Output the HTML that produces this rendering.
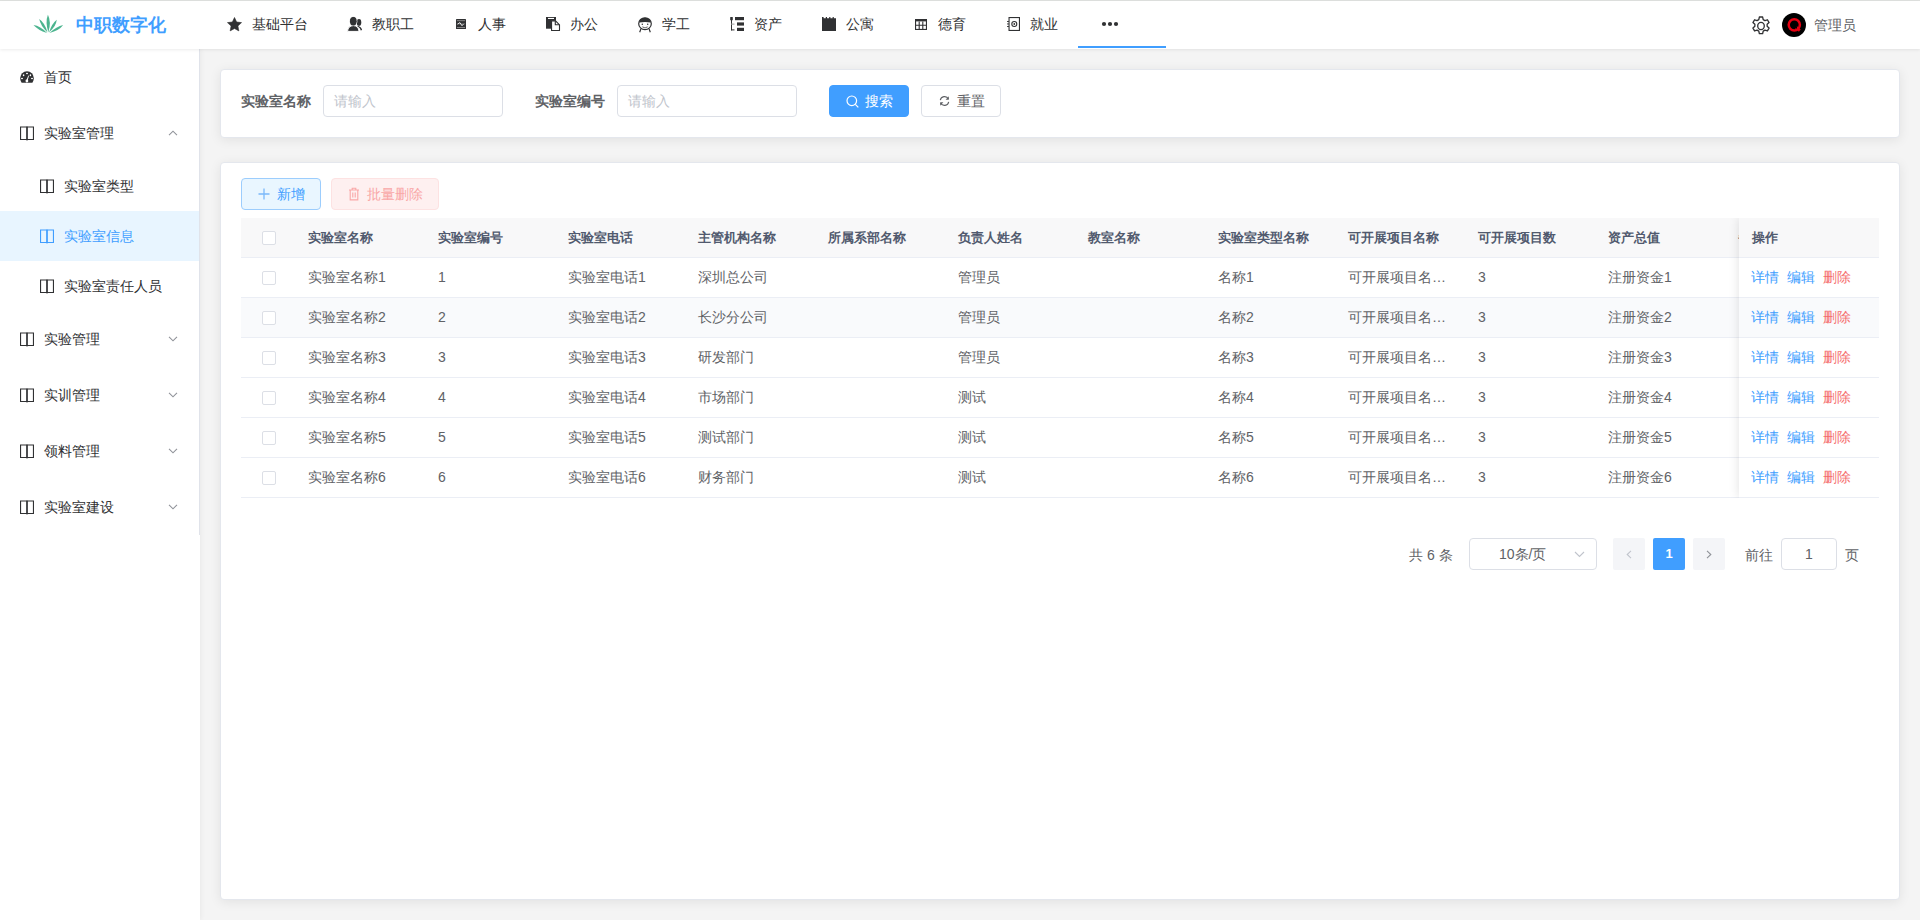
<!DOCTYPE html>
<html><head><meta charset="utf-8"><title>实验室信息</title>
<style>
*{box-sizing:border-box;margin:0;padding:0}
html,body{width:1920px;height:920px;overflow:hidden}
body{position:relative;background:#f4f4f4;font-family:"Liberation Sans",sans-serif;font-size:14px;color:#606266}
.abs{position:absolute}
.t{position:absolute;white-space:nowrap;line-height:20px}
.topline{position:absolute;left:0;top:0;width:1920px;height:1px;background:#dfe1df}
.header{position:absolute;left:0;top:1px;width:1920px;height:48px;background:#fff;box-shadow:0 1px 3px rgba(0,0,0,.08);z-index:3}
.logo-t{position:absolute;left:76px;top:12px;font-size:18px;font-weight:bold;color:#409eff;line-height:24px;white-space:nowrap}
.navt{position:absolute;top:13px;font-size:14px;line-height:20px;color:#303133;white-space:nowrap}
.uline{position:absolute;left:1078px;top:46px;width:88px;height:2px;background:#409eff;z-index:4}
.sidebar{position:absolute;left:0;top:49px;width:200px;height:871px;background:#fff;z-index:2}
.menu{position:absolute;left:0;top:0;width:200px;height:486px;border-right:1px solid #e0e3ea}
.sidebar{box-shadow:1px 0 5px rgba(0,0,0,.05)}
.mt{position:absolute;font-size:14px;line-height:20px;color:#303133;white-space:nowrap}
.card{position:absolute;background:#fff;border-radius:4px;border:1px solid #e4e7ed;box-shadow:0 2px 12px 0 rgba(0,0,0,.08)}
.lbl{position:absolute;top:91px;font-size:14px;font-weight:bold;line-height:20px;color:#606266;white-space:nowrap}
.inp{position:absolute;top:85px;width:180px;height:32px;border:1px solid #dcdfe6;border-radius:4px;background:#fff}
.inp span{position:absolute;left:10px;top:5px;font-size:14px;line-height:20px;color:#c0c4cc}
.btn{position:absolute;height:32px;border-radius:4px;border:1px solid #dcdfe6;background:#fff}
.btn span{position:absolute;top:5px;font-size:14px;line-height:20px;white-space:nowrap}
.tbl{position:absolute;left:241px;top:218px;width:1638px;height:280px;overflow:hidden;font-size:14px}
.tr{position:absolute;left:0;width:1638px;height:40px;border-bottom:1px solid #ebeef5}
.th{background:#f8f8f9}
.td{position:absolute;top:9px;line-height:20px;white-space:nowrap}
.th .td{font-weight:bold;color:#515a6e;font-size:13px;top:10px}
.cb{position:absolute;left:21px;top:13px;width:14px;height:14px;border:1px solid #dcdfe6;border-radius:2px;background:#fff}
.fix{position:absolute;left:1498px;top:0;width:140px;height:280px;box-shadow:0 0 10px rgba(0,0,0,.12);background:#fff}
.lk{position:absolute;top:9px;font-size:14px;line-height:20px;white-space:nowrap}
.pg{position:absolute;top:538px;height:32px;font-size:13px}
</style></head>
<body>
<div class="topline"></div>
<div class="header">
<svg class="abs" style="left:30px;top:11px" width="36" height="24" viewBox="0 0 36 24"><g fill="#4cb48f"><path d="M18.3 20.5Q21.6 9.8 17.9 2.8Q15.1 9.9 18.3 20.5Z"/><path d="M17.5 20.5Q15.0 10.9 9.2 7.0Q10.5 13.6 17.5 20.5Z"/><path d="M17.0 21.0Q10.3 13.8 3.5 13.0Q7.8 18.1 17.0 21.0Z"/><path d="M19.0 20.5Q26.1 14.4 26.8 7.8Q21.7 11.7 19.0 20.5Z"/><path d="M19.5 21.0Q29.1 18.6 33.2 13.0Q26.6 14.3 19.5 21.0Z"/></g></svg>
<div class="logo-t">中职数字化</div>
<svg class="abs" style="left:227px;top:15.5px" width="15" height="15" viewBox="0 0 15 15"><path fill="#303133" stroke="#303133" stroke-width=".6" stroke-linejoin="round" d="M7.50 0.50L9.62 4.99L14.54 5.61L10.92 9.01L11.85 13.89L7.50 11.50L3.15 13.89L4.08 9.01L0.46 5.61L5.38 4.99Z"/></svg>
<div class="navt" style="left:252px">基础平台</div>
<svg class="abs" style="left:347px;top:15px" width="16" height="16" viewBox="0 0 16 16"><g fill="#303133"><ellipse cx="12" cy="6.4" rx="2.3" ry="3.4"/><path d="M10.8 9.8c2.2.6 3.9 2.2 4.3 4.3l-1.4.4c-.5-1.9-1.6-3.2-3.3-3.9z"/></g><g fill="#303133" stroke="#fff" stroke-width="1"><ellipse cx="6.3" cy="5.3" rx="3.6" ry="4.6"/><path d="M.6 15.4C.6 11.8 3 9.6 6.3 9.6S12 11.8 12 15.4z"/></g><ellipse cx="6.3" cy="5.3" rx="3.3" ry="4.2" fill="#303133"/></svg>
<div class="navt" style="left:372px">教职工</div>
<svg class="abs" style="left:456px;top:18px" width="10" height="10" viewBox="0 0 10 10"><rect x="0" y="0" width="10" height="10" rx=".6" fill="#303133"/><rect x=".9" y="1.4" width="8.2" height=".7" fill="#aaa"/><rect x=".9" y="8" width="8.2" height=".7" fill="#aaa"/><rect x=".9" y="4.6" width="8.2" height=".6" fill="#888"/><path d="M1.6 5.2L3.9 3.6 6 6.7 7.6 4.9" stroke="#fff" stroke-width=".9" fill="none"/></svg>
<div class="navt" style="left:478px">人事</div>
<svg class="abs" style="left:546px;top:16px" width="15" height="14" viewBox="0 0 15 14"><rect x="0" y="0" width="10" height="11.7" fill="#303133"/><rect x="2" y=".9" width="6" height="1.1" fill="#fff"/><path d="M5.55 3.85H9.6l3.9 4v5.6H5.55z" fill="#fff" stroke="#303133" stroke-width="1.1" stroke-linejoin="round"/><path d="M9.3 3.9v3.8h4" fill="none" stroke="#303133" stroke-width="1.1"/></svg>
<div class="navt" style="left:570px">办公</div>
<svg class="abs" style="left:638px;top:15.5px" width="14" height="16" viewBox="0 0 14 16"><path d="M1.1 5.6C1.6 2.6 4 .8 7 .8s5.4 1.8 5.9 4.8C11 5.1 9 4.9 7 4.9s-4 .2-5.9.7z" fill="#303133"/><g fill="none" stroke="#303133" stroke-width="1.2"><ellipse cx="7" cy="6.7" rx="6.3" ry="5.9"/><path d="M3 11.6l-1.3 3.6M11 11.6l1.3 3.6"/></g><path d="M4.4 9.6Q7 11.8 9.6 9.6" fill="none" stroke="#777" stroke-width="1.1"/><circle cx="4.3" cy="7.3" r=".75" fill="#303133"/><circle cx="9.7" cy="7.3" r=".75" fill="#303133"/></svg>
<div class="navt" style="left:662px">学工</div>
<svg class="abs" style="left:730px;top:15px" width="15" height="16" viewBox="0 0 15 16"><g fill="#303133"><rect x=".2" y="1" width="2.6" height="3.2" rx=".5"/><rect x="1" y="4" width="1" height="10.4"/><rect x="1" y="7.6" width="3.5" height="1" fill="#999"/><rect x="1" y="13.4" width="3.5" height="1"/><rect x="5" y="1" width="9" height="3.2"/><rect x="7" y="6.4" width="7" height="3.2"/><rect x="7" y="11.8" width="7" height="3.2"/></g></svg>
<div class="navt" style="left:754px">资产</div>
<svg class="abs" style="left:822px;top:16px" width="14" height="14" viewBox="0 0 14 14"><path fill="#303133" d="M0 0h1.6v1.2h2.2V0h1.2v1.2h2.2V0h1.2v1.2h2.2V0h1.2v1.2H14V14H0z"/></svg>
<div class="navt" style="left:846px">公寓</div>
<svg class="abs" style="left:915px;top:18px" width="12" height="11" viewBox="0 0 12 11"><g fill="none" stroke="#303133" stroke-width="1.1"><rect x=".55" y=".55" width="10.9" height="9.9"/><path d="M.55 6.2h10.9M4.2 2.4v8M7.8 2.4v8"/></g><rect x="0" y="0" width="12" height="2.4" fill="#303133"/></svg>
<div class="navt" style="left:938px">德育</div>
<svg class="abs" style="left:1007px;top:16px" width="13" height="14" viewBox="0 0 13 14"><g fill="none" stroke="#303133" stroke-width="1.1"><rect x="2.05" y=".55" width="10.4" height="12.9"/><circle cx="7.3" cy="7" r="2.5"/></g><circle cx="7.3" cy="7" r=".9" fill="#303133"/><rect x="0" y="4" width="2" height=".9" fill="#303133"/><rect x="0" y="6.5" width="2" height=".9" fill="#303133"/><rect x="0" y="9" width="2" height=".9" fill="#303133"/></svg>
<div class="navt" style="left:1030px">就业</div>
<svg class="abs" style="left:1101px;top:20px" width="18" height="6" viewBox="0 0 18 6"><g fill="#303133"><circle cx="3" cy="3" r="2.1"/><circle cx="9" cy="3" r="2.1"/><circle cx="15" cy="3" r="2.1"/></g></svg>
<svg class="abs" style="left:1749.5px;top:13.5px" width="22" height="22" viewBox="0 0 24 24"><path fill="none" stroke="#303133" stroke-width="1.45" stroke-linejoin="round" d="M10.2 2.2h3.6l.6 2.8 1.9 1.1 2.7-.9 1.8 3.1-2.1 1.9v2.2l2.1 1.9-1.8 3.1-2.7-.9-1.9 1.1-.6 2.8h-3.6l-.6-2.8-1.9-1.1-2.7.9-1.8-3.1 2.1-1.9v-2.2L3.2 8.3 5 5.2l2.7.9 1.9-1.1z"/><ellipse cx="12" cy="12" rx="3.6" ry="3.9" fill="none" stroke="#303133" stroke-width="1.45"/></svg>
<svg class="abs" style="left:1782px;top:12px" width="24" height="24" viewBox="0 0 24 24"><circle cx="12" cy="12" r="12" fill="#000"/><circle cx="12.3" cy="11.8" r="5.6" fill="none" stroke="#e60012" stroke-width="2.5"/><path d="M14.2 14.4l3.6 3.2" stroke="#e60012" stroke-width="2.8"/><path d="M12.5 13.5h2.5v2.5z" fill="#000"/></svg>
<div class="navt" style="left:1814px;top:14px;color:#606266">管理员</div>
</div>
<div class="uline"></div>
<div class="sidebar"><div class="menu"></div>
<svg class="abs" style="left:20px;top:22px" width="14" height="12" viewBox="0 0 14 12"><path fill="#303133" d="M7 .3A6.8 6.8 0 0 0 .2 7.1c0 1.7.5 3.2 1.4 4.6h10.8c.9-1.4 1.4-2.9 1.4-4.6A6.8 6.8 0 0 0 7 .3z"/><g fill="#fff"><ellipse cx="7" cy="2.6" rx="1" ry=".75"/><ellipse cx="3.6" cy="4.2" rx=".8" ry="1"/><ellipse cx="10.4" cy="4.2" rx=".8" ry="1"/><ellipse cx="2" cy="7.5" rx="1" ry=".75"/><ellipse cx="12" cy="7.5" rx="1" ry=".75"/><circle cx="6.9" cy="10" r="1.4"/><path d="M6.3 9.6l2-5.2.7.3-1.5 5.3z"/></g></svg>
<div class="mt" style="left:44px;top:18px">首页</div>
<svg class="abs" style="left:20px;top:77px" width="14" height="15" viewBox="0 0 14 15"><g fill="none" stroke="#303133" stroke-width="1.1"><path d="M.55 1.05h6.45v12.4H.55z"/><path d="M7 1.05h6.45v12.4H7z"/></g><rect x="6.5" y="1" width="1" height="14" fill="#303133" opacity=".55"/></svg>
<div class="mt" style="left:44px;top:74px">实验室管理</div>
<svg class="abs" style="left:168px;top:81px" width="10" height="6" viewBox="0 0 10 6"><path d="M1 5.2L5 1.2l4 4" fill="none" stroke="#909399" stroke-width="1.1"/></svg>
<div class="abs" style="left:0;top:162px;width:199px;height:50px;background:#e8f5ff"></div>
<svg class="abs" style="left:40px;top:130px" width="14" height="15" viewBox="0 0 14 15"><g fill="none" stroke="#303133" stroke-width="1.1"><path d="M.55 1.05h6.45v12.4H.55z"/><path d="M7 1.05h6.45v12.4H7z"/></g><rect x="6.5" y="1" width="1" height="14" fill="#303133" opacity=".55"/></svg>
<div class="mt" style="left:64px;top:127px;color:#303133">实验室类型</div>
<svg class="abs" style="left:40px;top:180px" width="14" height="15" viewBox="0 0 14 15"><g fill="none" stroke="#409eff" stroke-width="1.1"><path d="M.55 1.05h6.45v12.4H.55z"/><path d="M7 1.05h6.45v12.4H7z"/></g><rect x="6.5" y="1" width="1" height="14" fill="#409eff" opacity=".55"/></svg>
<div class="mt" style="left:64px;top:177px;color:#409eff">实验室信息</div>
<svg class="abs" style="left:40px;top:230px" width="14" height="15" viewBox="0 0 14 15"><g fill="none" stroke="#303133" stroke-width="1.1"><path d="M.55 1.05h6.45v12.4H.55z"/><path d="M7 1.05h6.45v12.4H7z"/></g><rect x="6.5" y="1" width="1" height="14" fill="#303133" opacity=".55"/></svg>
<div class="mt" style="left:64px;top:227px;color:#303133">实验室责任人员</div>
<svg class="abs" style="left:20px;top:283px" width="14" height="15" viewBox="0 0 14 15"><g fill="none" stroke="#303133" stroke-width="1.1"><path d="M.55 1.05h6.45v12.4H.55z"/><path d="M7 1.05h6.45v12.4H7z"/></g><rect x="6.5" y="1" width="1" height="14" fill="#303133" opacity=".55"/></svg>
<div class="mt" style="left:44px;top:280px">实验管理</div>
<svg class="abs" style="left:168px;top:287px" width="10" height="6" viewBox="0 0 10 6"><path d="M1 .8l4 4 4-4" fill="none" stroke="#909399" stroke-width="1.1"/></svg>
<svg class="abs" style="left:20px;top:339px" width="14" height="15" viewBox="0 0 14 15"><g fill="none" stroke="#303133" stroke-width="1.1"><path d="M.55 1.05h6.45v12.4H.55z"/><path d="M7 1.05h6.45v12.4H7z"/></g><rect x="6.5" y="1" width="1" height="14" fill="#303133" opacity=".55"/></svg>
<div class="mt" style="left:44px;top:336px">实训管理</div>
<svg class="abs" style="left:168px;top:343px" width="10" height="6" viewBox="0 0 10 6"><path d="M1 .8l4 4 4-4" fill="none" stroke="#909399" stroke-width="1.1"/></svg>
<svg class="abs" style="left:20px;top:395px" width="14" height="15" viewBox="0 0 14 15"><g fill="none" stroke="#303133" stroke-width="1.1"><path d="M.55 1.05h6.45v12.4H.55z"/><path d="M7 1.05h6.45v12.4H7z"/></g><rect x="6.5" y="1" width="1" height="14" fill="#303133" opacity=".55"/></svg>
<div class="mt" style="left:44px;top:392px">领料管理</div>
<svg class="abs" style="left:168px;top:399px" width="10" height="6" viewBox="0 0 10 6"><path d="M1 .8l4 4 4-4" fill="none" stroke="#909399" stroke-width="1.1"/></svg>
<svg class="abs" style="left:20px;top:451px" width="14" height="15" viewBox="0 0 14 15"><g fill="none" stroke="#303133" stroke-width="1.1"><path d="M.55 1.05h6.45v12.4H.55z"/><path d="M7 1.05h6.45v12.4H7z"/></g><rect x="6.5" y="1" width="1" height="14" fill="#303133" opacity=".55"/></svg>
<div class="mt" style="left:44px;top:448px">实验室建设</div>
<svg class="abs" style="left:168px;top:455px" width="10" height="6" viewBox="0 0 10 6"><path d="M1 .8l4 4 4-4" fill="none" stroke="#909399" stroke-width="1.1"/></svg>
</div>
<div class="card" style="left:220px;top:69px;width:1680px;height:69px"></div>
<div class="lbl" style="left:241px">实验室名称</div><div class="inp" style="left:323px"><span>请输入</span></div>
<div class="lbl" style="left:535px">实验室编号</div><div class="inp" style="left:617px"><span>请输入</span></div>
<div class="btn" style="left:829px;top:85px;width:80px;background:#409eff;border-color:#409eff">
<svg class="abs" style="left:16px;top:9px" width="13" height="13" viewBox="0 0 13 13"><circle cx="5.8" cy="5.8" r="4.8" fill="none" stroke="#fff" stroke-width="1.2"/><path d="M9.3 9.3l3 3" stroke="#fff" stroke-width="1.2"/></svg>
<span style="left:35px;color:#fff">搜索</span></div>
<div class="btn" style="left:921px;top:85px;width:80px">
<svg class="abs" style="left:17px;top:9px" width="11" height="12" viewBox="0 0 11 12"><g fill="none" stroke="#606266" stroke-width="1.1"><path d="M1.3 5.2A4.3 4.3 0 0 1 9.4 4"/><path d="M9.7 6.8A4.3 4.3 0 0 1 1.6 8"/></g><path d="M9.8 1.3v3.4H6.6z" fill="#606266"/><path d="M1.2 10.7V7.3h3.2z" fill="#606266"/></svg>
<span style="left:35px;color:#606266">重置</span></div>
<div class="card" style="left:220px;top:162px;width:1680px;height:738px"></div>
<div class="btn" style="left:241px;top:178px;width:80px;background:#e9f6ff;border-color:#9ccdfd">
<svg class="abs" style="left:16px;top:9px" width="12" height="12" viewBox="0 0 12 12"><path d="M6 .5v11M.5 6h11" stroke="#7ab8fa" stroke-width="1.3"/></svg>
<span style="left:35px;color:#409eff">新增</span></div>
<div class="btn" style="left:331px;top:178px;width:108px;background:#fef0f0;border-color:#fde2e2">
<svg class="abs" style="left:16px;top:8px" width="12" height="14" viewBox="0 0 12 14"><g fill="none" stroke="#f9a7a7" stroke-width="1.1"><path d="M1 3h10M4.2 3V1.2h3.6V3M2.2 3.2v9.7h7.6V3.2M4.8 5.5v5M7.2 5.5v5"/></g></svg>
<span style="left:35px;color:#f9a7a7">批量删除</span></div>
<div class="tbl">
<div class="tr th" style="top:0"><div class="cb"></div><div class="td" style="left:67px">实验室名称</div><div class="td" style="left:197px">实验室编号</div><div class="td" style="left:327px">实验室电话</div><div class="td" style="left:457px">主管机构名称</div><div class="td" style="left:587px">所属系部名称</div><div class="td" style="left:717px">负责人姓名</div><div class="td" style="left:847px">教室名称</div><div class="td" style="left:977px">实验室类型名称</div><div class="td" style="left:1107px">可开展项目名称</div><div class="td" style="left:1237px">可开展项目数</div><div class="td" style="left:1367px">资产总值</div><div class="td" style="left:1497px">备</div></div>
<div class="tr" style="top:40px;background:#fff"><div class="cb"></div><div class="td" style="left:67px">实验室名称1</div><div class="td" style="left:197px">1</div><div class="td" style="left:327px">实验室电话1</div><div class="td" style="left:457px">深圳总公司</div><div class="td" style="left:717px">管理员</div><div class="td" style="left:977px">名称1</div><div class="td" style="left:1107px">可开展项目名…</div><div class="td" style="left:1237px">3</div><div class="td" style="left:1367px">注册资金1</div></div>
<div class="tr" style="top:80px;background:#f9fafc"><div class="cb"></div><div class="td" style="left:67px">实验室名称2</div><div class="td" style="left:197px">2</div><div class="td" style="left:327px">实验室电话2</div><div class="td" style="left:457px">长沙分公司</div><div class="td" style="left:717px">管理员</div><div class="td" style="left:977px">名称2</div><div class="td" style="left:1107px">可开展项目名…</div><div class="td" style="left:1237px">3</div><div class="td" style="left:1367px">注册资金2</div></div>
<div class="tr" style="top:120px;background:#fff"><div class="cb"></div><div class="td" style="left:67px">实验室名称3</div><div class="td" style="left:197px">3</div><div class="td" style="left:327px">实验室电话3</div><div class="td" style="left:457px">研发部门</div><div class="td" style="left:717px">管理员</div><div class="td" style="left:977px">名称3</div><div class="td" style="left:1107px">可开展项目名…</div><div class="td" style="left:1237px">3</div><div class="td" style="left:1367px">注册资金3</div></div>
<div class="tr" style="top:160px;background:#fff"><div class="cb"></div><div class="td" style="left:67px">实验室名称4</div><div class="td" style="left:197px">4</div><div class="td" style="left:327px">实验室电话4</div><div class="td" style="left:457px">市场部门</div><div class="td" style="left:717px">测试</div><div class="td" style="left:977px">名称4</div><div class="td" style="left:1107px">可开展项目名…</div><div class="td" style="left:1237px">3</div><div class="td" style="left:1367px">注册资金4</div></div>
<div class="tr" style="top:200px;background:#fff"><div class="cb"></div><div class="td" style="left:67px">实验室名称5</div><div class="td" style="left:197px">5</div><div class="td" style="left:327px">实验室电话5</div><div class="td" style="left:457px">测试部门</div><div class="td" style="left:717px">测试</div><div class="td" style="left:977px">名称5</div><div class="td" style="left:1107px">可开展项目名…</div><div class="td" style="left:1237px">3</div><div class="td" style="left:1367px">注册资金5</div></div>
<div class="tr" style="top:240px;background:#fff"><div class="cb"></div><div class="td" style="left:67px">实验室名称6</div><div class="td" style="left:197px">6</div><div class="td" style="left:327px">实验室电话6</div><div class="td" style="left:457px">财务部门</div><div class="td" style="left:717px">测试</div><div class="td" style="left:977px">名称6</div><div class="td" style="left:1107px">可开展项目名…</div><div class="td" style="left:1237px">3</div><div class="td" style="left:1367px">注册资金6</div></div>
<div class="fix">
<div class="tr th" style="top:0;width:140px"><div class="td" style="left:13px">操作</div></div>
<div class="tr" style="top:40px;width:140px;background:#fff"><div class="lk" style="left:12px;color:#409eff">详情</div><div class="lk" style="left:48px;color:#409eff">编辑</div><div class="lk" style="left:84px;color:#f56c6c">删除</div></div>
<div class="tr" style="top:80px;width:140px;background:#f9fafc"><div class="lk" style="left:12px;color:#409eff">详情</div><div class="lk" style="left:48px;color:#409eff">编辑</div><div class="lk" style="left:84px;color:#f56c6c">删除</div></div>
<div class="tr" style="top:120px;width:140px;background:#fff"><div class="lk" style="left:12px;color:#409eff">详情</div><div class="lk" style="left:48px;color:#409eff">编辑</div><div class="lk" style="left:84px;color:#f56c6c">删除</div></div>
<div class="tr" style="top:160px;width:140px;background:#fff"><div class="lk" style="left:12px;color:#409eff">详情</div><div class="lk" style="left:48px;color:#409eff">编辑</div><div class="lk" style="left:84px;color:#f56c6c">删除</div></div>
<div class="tr" style="top:200px;width:140px;background:#fff"><div class="lk" style="left:12px;color:#409eff">详情</div><div class="lk" style="left:48px;color:#409eff">编辑</div><div class="lk" style="left:84px;color:#f56c6c">删除</div></div>
<div class="tr" style="top:240px;width:140px;background:#fff"><div class="lk" style="left:12px;color:#409eff">详情</div><div class="lk" style="left:48px;color:#409eff">编辑</div><div class="lk" style="left:84px;color:#f56c6c">删除</div></div>
</div>
</div>
<div class="t" style="left:1409px;top:545px;font-size:14px;color:#606266">共 6 条</div>
<div class="pg" style="left:1469px;width:128px;border:1px solid #dcdfe6;border-radius:4px;background:#fff">
<div class="t" style="left:29px;top:5px;font-size:14px;color:#606266">10条/页</div>
<svg class="abs" style="left:104px;top:12px" width="11" height="7" viewBox="0 0 11 7"><path d="M1 1l4.5 4.5L10 1" fill="none" stroke="#c0c4cc" stroke-width="1.1"/></svg>
</div>
<div class="pg" style="left:1613px;width:32px;background:#f4f5f8;border-radius:2px">
<svg class="abs" style="left:13px;top:12px" width="6" height="9" viewBox="0 0 6 9"><path d="M5 .8L1.2 4.5 5 8.2" fill="none" stroke="#c0c4cc" stroke-width="1.1"/></svg></div>
<div class="pg" style="left:1653px;width:32px;background:#409eff;border-radius:2px">
<div class="t" style="left:0;top:6px;width:32px;text-align:center;font-weight:bold;color:#fff;font-size:13px">1</div></div>
<div class="pg" style="left:1693px;width:32px;background:#f4f5f8;border-radius:2px">
<svg class="abs" style="left:13px;top:12px" width="6" height="9" viewBox="0 0 6 9"><path d="M1 .8l3.8 3.7L1 8.2" fill="none" stroke="#909399" stroke-width="1.1"/></svg></div>
<div class="t" style="left:1745px;top:545px;font-size:14px;color:#606266">前往</div>
<div class="pg" style="left:1781px;width:56px;border:1px solid #dcdfe6;border-radius:4px;background:#fff">
<div class="t" style="left:0;top:5px;width:54px;text-align:center;font-size:14px;color:#606266">1</div></div>
<div class="t" style="left:1845px;top:545px;font-size:14px;color:#606266">页</div>
</body></html>
